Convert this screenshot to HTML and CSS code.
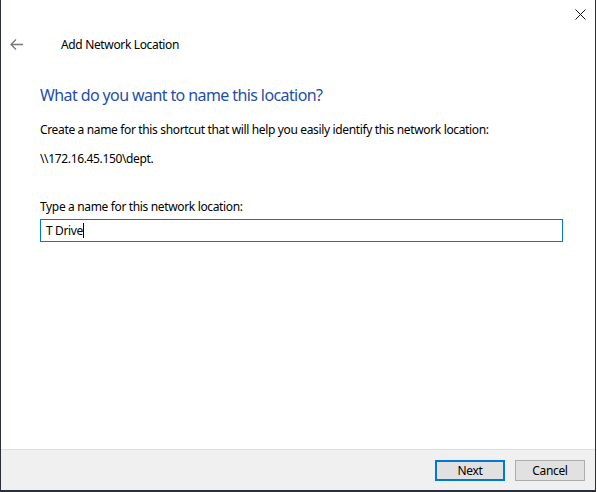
FILE: index.html
```html
<!DOCTYPE html>
<html>
<head>
<meta charset="utf-8">
<link rel="stylesheet" href="styles.css">
</head>
<body>
<div class="window">
  <div class="titlebar">
    <svg class="close" width="11" height="11" viewBox="0 0 11 11"><path d="M0.5 0.5 L10.5 10.5 M10.5 0.5 L0.5 10.5" stroke="#111" stroke-width="1" fill="none"/></svg>
  </div>
  <div class="header">
    <svg class="back" width="13" height="11" viewBox="0 0 13 11"><path d="M6 0.5 L1 5.5 L6 10.5 M1 5.5 L13 5.5" stroke="#7a7a7a" stroke-width="1.3" fill="none"/></svg>
    <span class="wtitle">Add Network Location</span>
  </div>
  <div class="content">
    <h1 class="instruction">What do you want to name this location?</h1>
    <p class="text">Create a name for this shortcut that will help you easily identify this network location:</p>
    <p class="text path">\\172.16.45.150\dept.</p>
    <label class="text label">Type a name for this network location:</label>
    <div class="input">T Drive<span class="caret"></span></div>
  </div>
  <div class="footer">
    <button class="btn primary">Next</button>
    <button class="btn">Cancel</button>
  </div>
</div>
</body>
</html>
```
FILE: styles.css
```css
html, body {
  margin: 0;
  padding: 0;
  background: #ffffff;
}
body {
  width: 597px;
  height: 492px;
  overflow: hidden;
  font-family: "Noto Sans", "Open Sans", sans-serif;
  font-size: 12px;
  letter-spacing: -0.35px;
  color: #000;
}
.window {
  box-sizing: border-box;
  width: 596px;
  height: 492px;
  border-left: 1px solid #2b2f3a;
  border-right: 1px solid #2b2f3a;
  border-bottom: 2px solid #2b2f3a;
  display: flex;
  flex-direction: column;
  background: #fff;
}
.titlebar {
  height: 30px;
  display: flex;
  justify-content: flex-end;
  align-items: flex-start;
}
.close {
  margin-top: 9px;
  margin-right: 9px;
}
.header {
  height: 30px;
  display: flex;
  align-items: center;
  margin-top: -1px;
}
.back {
  margin-left: 9px;
  margin-right: 38px;
}
.wtitle {
  font-size: 12px;
  color: #000;
}
.content {
  flex: 1;
  padding: 25px 32px 0 39px;
  display: flex;
  flex-direction: column;
}
.instruction {
  margin: 0;
  font-weight: normal;
  font-size: 16px;
  letter-spacing: -0.6px;
  color: #1f4fa8;
  line-height: 22px;
}
.text {
  margin: 0;
  font-size: 12px;
  line-height: 16px;
}
.instruction + .text {
  margin-top: 16px;
}
.path {
  margin-top: 13px;
}
.label {
  margin-top: 32px;
}
.input {
  margin-top: 4px;
  box-sizing: border-box;
  height: 23px;
  border: 1px solid #0078d7;
  padding: 2px 5px;
  line-height: 17px;
}
.caret {
  display: inline-block;
  width: 1px;
  height: 15px;
  background: #000;
  vertical-align: -3px;
}
.footer {
  height: 41px;
  box-sizing: border-box;
  background: #f0f0f0;
  border-top: 1px solid #dfdfdf;
  display: flex;
  justify-content: flex-end;
  align-items: center;
  padding-right: 10px;
  gap: 10px;
}
.btn {
  box-sizing: border-box;
  width: 70px;
  height: 21px;
  background: #e1e1e1;
  border: 1px solid #adadad;
  font-family: inherit;
  font-size: 12px;
  letter-spacing: -0.35px;
  color: #000;
  padding: 0;
  margin: 0;
}
.btn.primary {
  border: 2px solid #0078d7;
}
```
